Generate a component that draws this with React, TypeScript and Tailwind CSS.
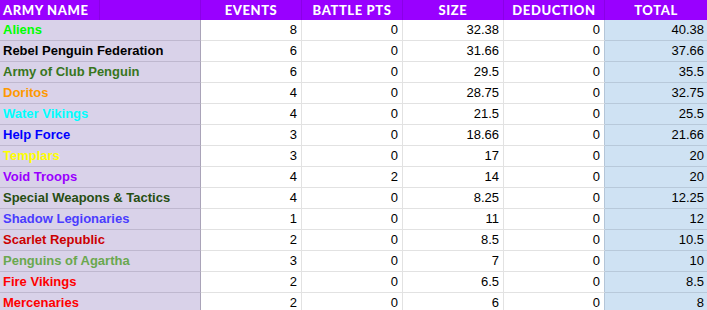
import React from 'react';

type Row = { name: string; color: string; events: string; battle: string; size: string; deduction: string; total: string };

const rows: Row[] = [
  { name: 'Aliens', color: 'text-[#00ff00]', events: '8', battle: '0', size: '32.38', deduction: '0', total: '40.38' },
  { name: 'Rebel Penguin Federation', color: 'text-[#000000]', events: '6', battle: '0', size: '31.66', deduction: '0', total: '37.66' },
  { name: 'Army of Club Penguin', color: 'text-[#38761d]', events: '6', battle: '0', size: '29.5', deduction: '0', total: '35.5' },
  { name: 'Doritos', color: 'text-[#ff9900]', events: '4', battle: '0', size: '28.75', deduction: '0', total: '32.75' },
  { name: 'Water Vikings', color: 'text-[#00ffff]', events: '4', battle: '0', size: '21.5', deduction: '0', total: '25.5' },
  { name: 'Help Force', color: 'text-[#0000ff]', events: '3', battle: '0', size: '18.66', deduction: '0', total: '21.66' },
  { name: 'Templars', color: 'text-[#ffff00]', events: '3', battle: '0', size: '17', deduction: '0', total: '20' },
  { name: 'Void Troops', color: 'text-[#9900ff]', events: '4', battle: '2', size: '14', deduction: '0', total: '20' },
  { name: 'Special Weapons & Tactics', color: 'text-[#274e13]', events: '4', battle: '0', size: '8.25', deduction: '0', total: '12.25' },
  { name: 'Shadow Legionaries', color: 'text-[#4a3cff]', events: '1', battle: '0', size: '11', deduction: '0', total: '12' },
  { name: 'Scarlet Republic', color: 'text-[#cc0000]', events: '2', battle: '0', size: '8.5', deduction: '0', total: '10.5' },
  { name: 'Penguins of Agartha', color: 'text-[#6aa84f]', events: '3', battle: '0', size: '7', deduction: '0', total: '10' },
  { name: 'Fire Vikings', color: 'text-[#ff0000]', events: '2', battle: '0', size: '6.5', deduction: '0', total: '8.5' },
  { name: 'Mercenaries', color: 'text-[#ff0000]', events: '2', battle: '0', size: '6', deduction: '0', total: '8' },
];

const headers = ['EVENTS', 'BATTLE PTS', 'SIZE', 'DEDUCTION', 'TOTAL'];

const numCell = 'h-[21px] border-b border-r border-[#e2e2e2] bg-white pr-[4px] text-right leading-[20px]';

export default function App() {
  return (
    <div className="h-[310px] w-[707px] overflow-hidden bg-white text-[13px] text-black" style={{ fontFamily: '"Liberation Sans", Arial, sans-serif' }}>
      <div className="grid grid-cols-[201px_101px_101px_101px_101px_103px]">
        {/* header */}
        <div className="flex h-[20px] bg-[#9900ff] text-white font-black text-[13px] tracking-[0.6px]" style={{ fontFamily: 'Lato, sans-serif' }}>
          <div className="w-[100px] border-r border-[#8a00e6] pl-[3px] leading-[20px] whitespace-nowrap">ARMY NAME</div>
          <div className="flex-1 border-r border-[#8a00e6]" />
        </div>
        {headers.map(h => (
          <div
            key={h}
            className="h-[20px] border-r border-[#8a00e6] bg-[#9900ff] text-center text-[13px] font-black leading-[20px] tracking-[0.6px] text-white whitespace-nowrap"
            style={{ fontFamily: 'Lato, sans-serif' }}
          >
            {h}
          </div>
        ))}

        {rows.map(r => (
          <React.Fragment key={r.name}>
            <div className={`h-[21px] border-b border-r border-b-[#bfb8cf] border-r-[#a9a3b8] bg-[#d9d2e9] pl-[3px] font-bold leading-[20px] whitespace-nowrap ${r.color}`}>
              {r.name}
            </div>
            <div className={numCell}>{r.events}</div>
            <div className={numCell}>{r.battle}</div>
            <div className={numCell}>{r.size}</div>
            <div className={`${numCell} border-r-[#b5c6d8]`}>{r.deduction}</div>
            <div className="h-[21px] border-b border-[#b8c9da] bg-[#cfe2f3] pr-[4px] text-right leading-[20px]">{r.total}</div>
          </React.Fragment>
        ))}
      </div>
    </div>
  );
}
